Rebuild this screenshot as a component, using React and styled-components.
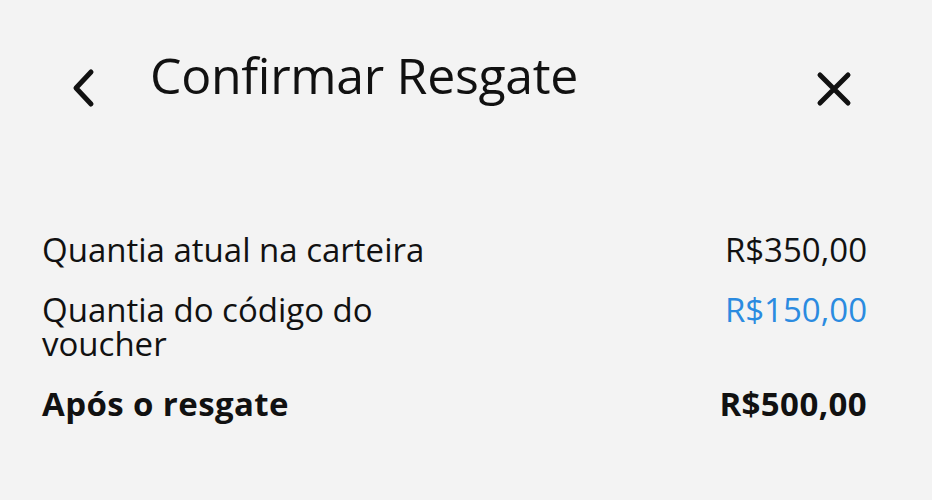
import React from "react";
import styled, { createGlobalStyle } from "styled-components";

const GlobalStyle = createGlobalStyle`
  html, body {
    margin: 0;
    padding: 0;
    background: #f3f3f3;
  }
  body {
    font-family: "Open Sans", "Noto Sans", sans-serif;
    color: #111;
  }
`;

const Panel = styled.div`
  width: 932px;
  height: 500px;
  box-sizing: border-box;
  background: #f3f3f3;
  padding: 42px 65px 0 42px;
`;

const Header = styled.div`
  display: flex;
  align-items: flex-start;
  height: 191px;
`;

const IconButton = styled.button`
  border: 0;
  background: none;
  padding: 0;
  margin: ${(p) => p.$margin || "0"};
  display: flex;
  color: #111;
  cursor: pointer;
`;

const Title = styled.h1`
  flex: 1;
  margin: -2px 0 0 54px;
  font-size: 50px;
  font-weight: 400;
  line-height: 70px;
  letter-spacing: -0.3px;
`;

const Rows = styled.div`
  display: flex;
  flex-direction: column;
  gap: 26px;
`;

const Row = styled.div`
  display: flex;
  justify-content: space-between;
  align-items: flex-start;
  font-size: 33px;
  line-height: 34px;
  font-weight: ${(p) => (p.$bold ? 700 : 400)};
  letter-spacing: ${(p) => (p.$bold ? "0.4px" : "0")};
`;

const Label = styled.span`
  max-width: 420px;
`;

const Value = styled.span`
  color: ${(p) => (p.$accent ? "#2b8be0" : "#111")};
`;

const BackIcon = () => (
  <svg width="26" height="40" viewBox="0 0 26 40">
    <path d="M21 4 L6 20 L21 36" fill="none" stroke="currentColor" strokeWidth="5" strokeLinecap="round" strokeLinejoin="round" />
  </svg>
);

const CloseIcon = () => (
  <svg width="40" height="40" viewBox="0 0 40 40">
    <path d="M6 6 L34 34 M34 6 L6 34" fill="none" stroke="currentColor" strokeWidth="5" strokeLinecap="round" />
  </svg>
);

const App = () => {
  return (
    <Panel>
      <GlobalStyle />
      <Header>
        <IconButton $margin="26px 0 0 28px">
          <BackIcon />
        </IconButton>
        <Title>Confirmar Resgate</Title>
        <IconButton $margin="27px 13px 0 0">
          <CloseIcon />
        </IconButton>
      </Header>
      <Rows>
        <Row>
          <Label>Quantia atual na carteira</Label>
          <Value>R$350,00</Value>
        </Row>
        <Row>
          <Label>Quantia do código do voucher</Label>
          <Value $accent>R$150,00</Value>
        </Row>
        <Row $bold>
          <Label>Após o resgate</Label>
          <Value>R$500,00</Value>
        </Row>
      </Rows>
    </Panel>
  );
};

export default App;
